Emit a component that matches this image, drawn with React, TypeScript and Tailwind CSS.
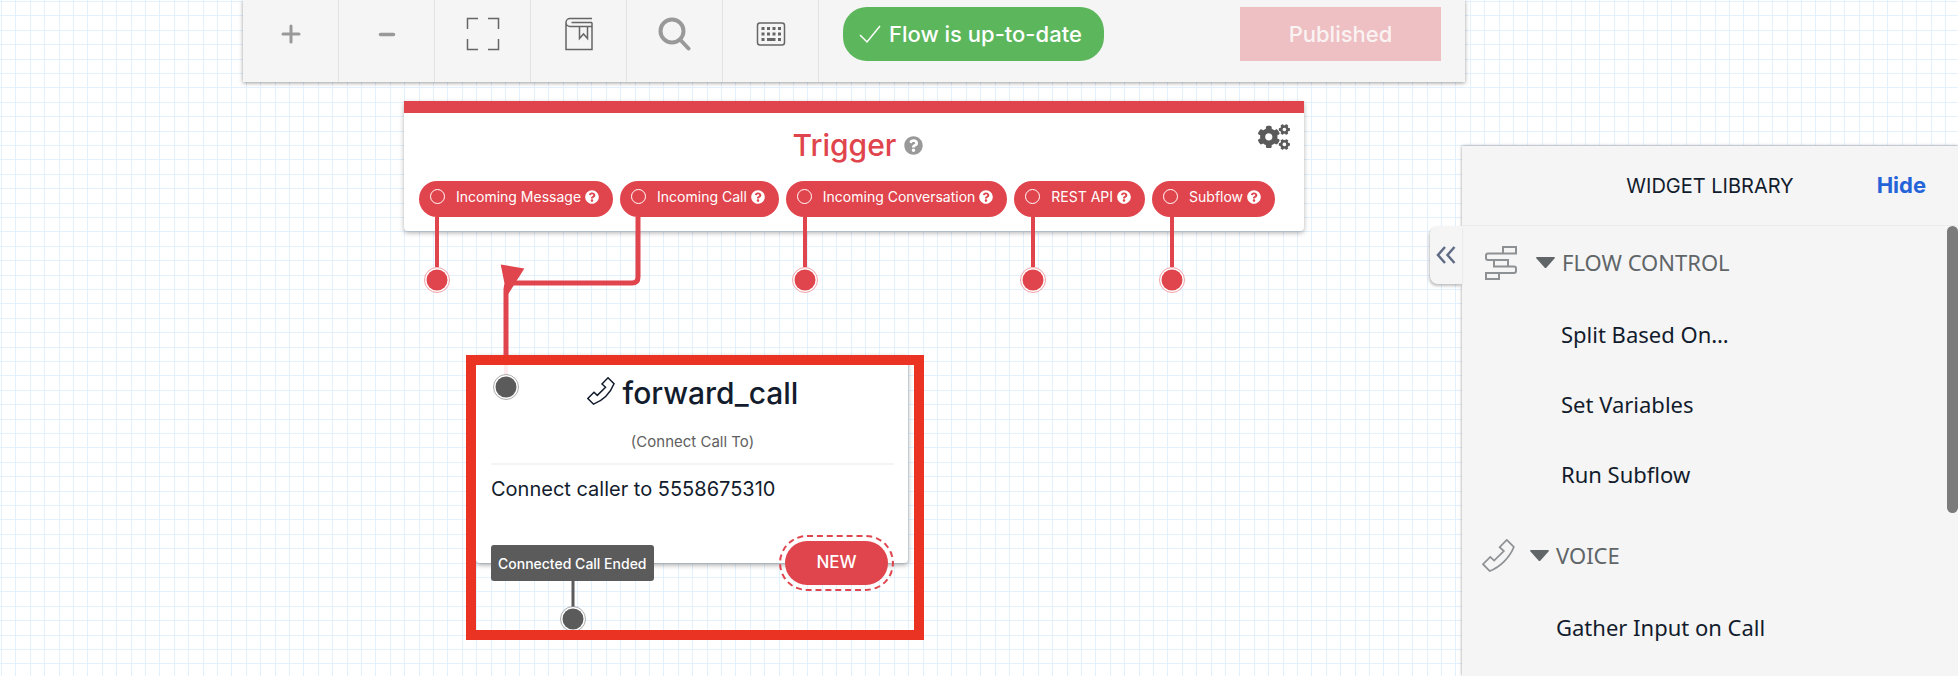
import { useState } from "react";
import type { ReactNode } from "react";
import { FaCogs, FaQuestionCircle } from "react-icons/fa";

const RED = "#e0444c";
const GRAY = "#5b5b5b";

const TRIGGERS = ["Incoming Message", "Incoming Call", "Incoming Conversation", "REST API", "Subflow"];

const SECTIONS = [
  { title: "FLOW CONTROL", icon: "flow", items: ["Split Based On…", "Set Variables", "Run Subflow"] },
  { title: "VOICE", icon: "voice", items: ["Gather Input on Call"] },
];

function PhoneIcon({ className }: { className: string }) {
  return (
    <svg viewBox="0 0 34 34" fill="none" stroke="currentColor" strokeWidth="1.8" className={className}>
      <path d="M25.5 1 32.8 8.2C28.5 19 19 28.5 8 33L1 26l7.5-7.5 4 3.8 10-9.8-4.3-4z" />
    </svg>
  );
}

function FlowIcon({ className }: { className: string }) {
  return (
    <svg viewBox="0 0 32 34" fill="none" stroke="currentColor" strokeWidth="2" className={className}>
      <path d="M18 7.5V1h13v6.5H3q-2 0-2 2V12q0 2 2 2h20v6.5" />
      <path d="M9 14v6.5h20q2 0 2 2V25q0 2-2 2H1v6h13v-6" />
    </svg>
  );
}

function ToolButton({ label, children }: { label: string; children: ReactNode }) {
  return (
    <button aria-label={label} className="flex w-24 items-center justify-center border-r border-[#e2e2e2] pb-[14px]">
      {children}
    </button>
  );
}

function Toolbar() {
  return (
    <header className="relative z-10 -mr-[3px] ml-[243px] flex h-[82px] bg-[#f5f5f5] shadow-[0_1px_4px_rgba(0,0,0,0.4)]">
      <ToolButton label="Zoom in">
        <svg width="20" height="20" viewBox="0 0 20 20" stroke="#999" strokeWidth="3" strokeLinecap="round">
          <path d="M10 2v16M2 10h16" />
        </svg>
      </ToolButton>
      <ToolButton label="Zoom out">
        <svg width="18" height="20" viewBox="0 0 18 20" stroke="#999" strokeWidth="3.5" strokeLinecap="round">
          <path d="M2.5 10.5h13" />
        </svg>
      </ToolButton>
      <ToolButton label="Fit to screen">
        <svg width="34" height="34" viewBox="0 0 34 34" fill="none" stroke="#666" strokeWidth="1.5">
          <path d="M12 1.5H1.5V12M22 1.5h10.5V12M32.5 22v10.5H22M12 32.5H1.5V22" />
        </svg>
      </ToolButton>
      <ToolButton label="Documentation">
        <svg width="28" height="34" viewBox="0 0 28 34" fill="none" stroke="#666" strokeWidth="1.5">
          <path d="M27 1.5H5a4 4 0 0 0 0 8h22v23H1V5.5M27 5.5H6.5M27 5.5v4M14.5 9.5v12l4-4.5 4 4.5v-12" />
        </svg>
      </ToolButton>
      <ToolButton label="Search">
        <svg width="34" height="34" viewBox="0 0 34 34" fill="none" stroke="#999" strokeWidth="4" strokeLinecap="round">
          <circle cx="14" cy="14" r="11.5" />
          <path d="m22.5 23 8 8.5" />
        </svg>
      </ToolButton>
      <ToolButton label="Keyboard shortcuts">
        <svg width="30" height="24" viewBox="0 0 30 24" fill="none" stroke="#666" strokeWidth="1.5">
          <rect x="1.5" y="1" width="27" height="22" rx="2.5" />
          <path d="M5.500 6.500h20M5.500 12h20" strokeWidth="3" strokeDasharray="3 2.5" />
          <path d="M5.5 17.5h3M11 17.5h8.5M22 17.5h3" strokeWidth="3" />
        </svg>
      </ToolButton>
      <div className="flex flex-1 items-start justify-between px-6 pt-[7px]">
        <div className="flex h-[54px] items-center gap-2 rounded-[24px] bg-[#5cb65c] pr-[22px] pl-4 text-[22px] font-medium text-white">
          <svg width="22" height="20" viewBox="0 0 22 20" fill="none" stroke="currentColor" strokeWidth="1.5">
            <path d="m1 11 7 7L21 2" />
          </svg>
          Flow is up-to-date
        </div>
        <button disabled className="h-[54px] w-[201px] bg-[#eec0c3] text-[22px] font-medium text-[#faf3f3]">
          Published
        </button>
      </div>
    </header>
  );
}

function Endpoint({ cx, cy, color }: { cx: number; cy: number; color: string }) {
  return (
    <g>
      <circle cx={cx} cy={cy} r="12.5" fill="#fff" stroke={color} strokeWidth="0.5" />
      <circle cx={cx} cy={cy} r="10.5" fill={color} />
    </g>
  );
}

function Connectors() {
  return (
    <svg className="pointer-events-none absolute inset-0 h-full w-full" fill="none">
      {/* unconnected triggers */}
      <path d="M437 135v50M805 135v50M1033 135v50M1172 135v50" stroke={RED} strokeWidth="4" />
      {/* Incoming Call -> forward_call */}
      <path d="M638 135v60q0 6-6 6H511q-5 0-5 6v66" stroke={RED} strokeWidth="5" />
      <path d="M506 273v20" stroke={RED} strokeWidth="4" opacity="0.1" />
      <path d="m500.7 182.5 23.6 4L507 214z" fill={RED} />
      {[437, 805, 1033, 1172].map((x) => (
        <Endpoint key={x} cx={x} cy={198} color={RED} />
      ))}
      <Endpoint cx={506} cy={305} color={GRAY} />
      <path d="M573 499v30" stroke={GRAY} strokeWidth="3" />
      <Endpoint cx={573} cy={537} color={GRAY} />
    </svg>
  );
}

function TriggerNode() {
  return (
    <section className="absolute top-[19px] left-[404px] w-[900px] rounded-b border-t-[12px] border-[#e0444c] bg-white px-[15px] pt-3 pb-[14px] shadow-[0_2px_5px_rgba(0,0,0,0.3)]">
      <div className="flex items-center justify-center gap-2 pl-2">
        <h2 className="text-[30px] leading-[40px] font-medium text-[#e0444c]">Trigger</h2>
        <FaQuestionCircle className="size-[19px] text-[#999]" />
      </div>
      <button aria-label="Trigger settings" className="absolute top-[8px] right-[14px] text-[#5b5b5b]">
        <FaCogs className="size-8" />
      </button>
      <div className="mt-4 flex gap-[7px]">
        {TRIGGERS.map((name) => (
          <div key={name} className="flex h-9 items-center rounded-full bg-[#e0444c] pr-[14px] pb-[5px] pl-[11px] text-[14px] whitespace-nowrap text-white">
            <span className="mr-[11px] size-[15px] rounded-full border border-white" />
            {name}
            <FaQuestionCircle className="ml-1 size-[14px]" />
          </div>
        ))}
      </div>
    </section>
  );
}

function CallNode() {
  return (
    <section className="absolute top-[273px] left-[476px] w-[432px] rounded-b bg-white pt-[18px] pr-[14px] pl-[15px] text-[#121c2d] shadow-[0_2px_5px_rgba(0,0,0,0.35)]">
      <div className="flex items-center justify-center gap-2">
        <PhoneIcon className="-mt-1 size-7" />
        <h2 className="text-[30px] leading-[40px] font-medium">forward_call</h2>
      </div>
      <p className="mt-[19px] text-center text-[15px] leading-5 text-[#606060]">(Connect Call To)</p>
      <hr className="mt-[11px] border-t-2 border-[#f4f4f6]" />
      <p className="mt-[10px] text-[20px] leading-7">Connect caller to 5558675310</p>
      <div className="-mb-7 flex items-center justify-between pt-8">
        <div className="flex h-9 items-center rounded-[3px] bg-[#5b5b5b] px-[7px] text-[14px] font-medium text-white">
          Connected Call Ended
        </div>
        <div className="rounded-full border-2 border-dashed border-[#e0444c] p-1">
          <button className="block h-11 w-[103px] rounded-full bg-[#e0444c] text-[17px] font-medium text-white">NEW</button>
        </div>
      </div>
    </section>
  );
}

function WidgetLibrary() {
  const [hidden, setHidden] = useState(false);

  return (
    <aside className="relative mt-[146px] w-[496px] shrink-0 bg-[#f5f5f5] shadow-[0_0_3px_rgba(0,0,0,0.4)]">
      <button aria-label="Expand library" className="absolute top-20 -left-8 flex h-[58px] w-8 items-center justify-center rounded-l-lg bg-[#f5f5f5] text-[#606b85] shadow-[-1px_2px_3px_rgba(0,0,0,0.25)]">
        <svg width="20" height="18" viewBox="0 0 20 18" fill="none" stroke="currentColor" strokeWidth="2.5">
          <path d="M9 1 2 9l7 8M18.5 1l-7 8 7 8" />
        </svg>
      </button>
      <div className="grid h-20 grid-cols-[1fr_auto_1fr] items-center border-b border-[#ececec] px-8">
        <h2 className="col-start-2 text-[20px] text-[#121c2d]">WIDGET LIBRARY</h2>
        <button onClick={() => setHidden(!hidden)} className="justify-self-end text-[22px] font-bold text-[#2563d9]">
          Hide
        </button>
      </div>
      {!hidden && (
        <div className="flex flex-col gap-[10px] font-['Noto_Sans',sans-serif] text-[22px]">
          {SECTIONS.map(({ title, icon, items }) => (
            <section key={title} className={icon === "flow" ? "pl-[23px]" : "pl-[20px]"}>
              <h3 className="flex h-[73px] items-center text-[#606568]">
                {icon === "flow" ? (
                  <FlowIcon className="mr-[19px] h-[34px] w-8 text-[#8d9193]" />
                ) : (
                  <PhoneIcon className="mr-[15px] size-[33px] text-[#8d9193]" />
                )}
                <svg width="19" height="12" viewBox="0 0 19 12" fill="currentColor" className="mr-[7px]">
                  <path d="M1 0h17q1.5 0 .5 1.5l-8 9q-1 1-2 0l-8-9Q-.5 0 1 0z" />
                </svg>
                {title}
              </h3>
              <ul className={icon === "flow" ? "pl-[76px] text-[#121c2d]" : "pl-[74px] text-[#121c2d]"}>
                {items.map((item) => (
                  <li key={item} className="flex h-[70px] items-center">{item}</li>
                ))}
              </ul>
            </section>
          ))}
        </div>
      )}
      <div className="absolute top-20 right-0 h-[287px] w-[11px] rounded-full bg-[#7b7b7b]" />
    </aside>
  );
}

export default function App() {
  return (
    <div className="flex h-screen overflow-hidden bg-white bg-[repeating-linear-gradient(to_right,#e3f0fd_0_1px,transparent_1px_20%),repeating-linear-gradient(to_bottom,#e3f0fd_0_1px,transparent_1px_20%)] bg-[length:72px_72px] bg-[position:1px_1px] font-[Inter,sans-serif]">
      <main className="flex min-w-0 flex-1 flex-col">
        <Toolbar />
        <div className="relative flex-1">
          <TriggerNode />
          <CallNode />
          <Connectors />
          <div className="pointer-events-none absolute top-[273px] left-[466px] h-[285px] w-[458px] border-[10px] border-[#ea3323]" />
        </div>
      </main>
      <WidgetLibrary />
    </div>
  );
}
